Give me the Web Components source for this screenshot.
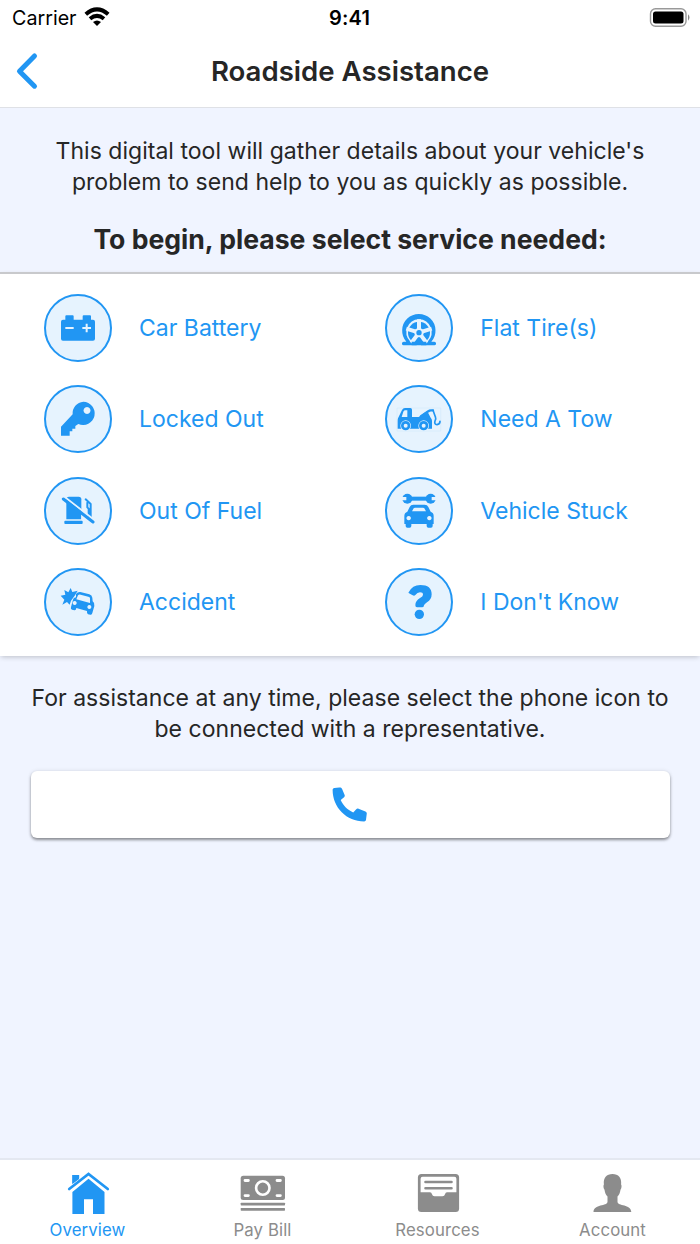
<!DOCTYPE html>
<html lang="en">
<head>
<meta charset="utf-8">
<title>Roadside Assistance</title>
<style>
  body {
    margin: 0;
    background: #f0f4ff;
    font-family: Inter, "Liberation Sans", sans-serif;
    color: #262626;
    --blue: #2196f3;
    --grey: #8c8c8c;
  }
</style>
</head>
<body>
<roadside-app></roadside-app>

<script>
// Service icons share the 204 unit box of the circle they sit in
const serviceIcons = {
  battery: `
    <path d="M57 77h7V67q0-3 3-3h19q3 0 3 3v10h27V67q0-3 3-3h19q3 0 3 3v10h6q6 0 6 6v51q0 6-6 6H57q-6 0-6-6V83q0-6 6-6z"/>
    <path d="M64 102h25M115 102h26M128 89v26" fill="none" stroke="#e6f3fe" stroke-width="6"/>`,
  key: `
    <path fill-rule="evenodd" d="M118 50a35 35 0 1 1-15 67l-9 6v8h-9v8h-8v13H51v-27l35-37a35 35 0 0 1 32-38zm11 16a10.500 10.500 0 1 0 .1 0z"/>`,
  fuel: `
    <path d="M67 67q0-8 8-8h29q8 0 8 8v60H67z"/>
    <path d="M125 67l15 14v40M130 77v14l6 6M134 97v20" fill="none" stroke="currentColor" stroke-width="6" stroke-linecap="round" stroke-linejoin="round"/>
    <path d="M62 60L148 127" fill="none" stroke="#e6f3fe" stroke-width="6"/>
    <path d="M112 112l10 12v5h-10z" fill="#e6f3fe"/>
    <path d="M58 66L147 135" fill="none" stroke="currentColor" stroke-width="9" stroke-linecap="round"/>
    <rect x="61" y="131" width="55" height="10" rx="3"/>`,
  accident: `
    <path d="M50 83l14-3-3-14 12 7 7-13 5 12 16-4-8 14-12 16-4 12-8-8-14 8 6-15z"/>
    <path fill-rule="evenodd" d="M96 78q5-7 13-6l27 7q8 2 9 10l1 11q7 5 5 14l-6 21q-1 6-6 5l-7-1q-4-1-3-10l-32-9q-1 8-6 7l-7-2q-5-1-3-8l6-22q1-6 9-7zm6 4l-5 12 41 11v-14q0-4-5-5l-23-6q-6-1-8 2zm-10 17a6 6 0 1 0 .1 0zm44 12a6 6 0 1 0 .1 0z"/>`,
  tire: `
    <path fill-rule="evenodd" d="M64 143a50 50 0 1 1 75 0h9q5 0 5 5v1q0 5-5 5H56q-5 0-5-5v-1q0-5 5-5zM102 76a39 39 0 0 0-26 67h52a39 39 0 0 0-26-67z"/>
    <circle cx="102" cy="116" r="33"/>
    <path d="M102 116V76M102 116L64 104M102 116L140 104M102 116L79 147M102 116L125 147" fill="none" stroke="#e6f3fe" stroke-width="12"/>
    <circle cx="102" cy="116" r="14" fill="#e6f3fe"/>
    <circle cx="102" cy="116" r="8"/>
    <path d="M80 143h15v11H80zM108 143h16v11h-16z"/>`,
  tow: `
    <path fill="none" stroke="#d3eafc" stroke-width="2" d="M36 69h131v69H36z"/>
    <path fill-rule="evenodd" d="M39 100l12-25q3-6 9-6h16q5 0 5 5v22h20l18-13 8-4 10 19q4 4 4 9v24H38v-23q0-4 1-8zm11-4h17V76h-6q-4 0-6 4z"/>
    <path d="M108 94l22-15q3-3 8-3h6" fill="none" stroke="currentColor" stroke-width="7" stroke-linecap="round" stroke-linejoin="round"/>
    <path d="M144 76l7 19q3 7-1 13-3 10 6 11 9-1 9-10" fill="none" stroke="currentColor" stroke-width="5" stroke-linecap="round" stroke-linejoin="round"/>
    <circle cx="62" cy="122" r="16" fill="#e6f3fe"/>
    <circle cx="116" cy="122" r="16" fill="#e6f3fe"/>
    <circle cx="62" cy="122" r="10" fill="none" stroke="currentColor" stroke-width="8"/>
    <circle cx="116" cy="122" r="10" fill="none" stroke="currentColor" stroke-width="8"/>`,
  stuck: `
    <circle cx="67" cy="65" r="15"/>
    <circle cx="137" cy="65" r="15"/>
    <path d="M66 65h72" stroke="currentColor" stroke-width="12"/>
    <path d="M46 65h18M140 65h18" stroke="#e6f3fe" stroke-width="10"/>
    <path fill-rule="evenodd" d="M67 104L74 90q3-7 11-7h34q8 0 11 7l7 14q9 3 9 13v24h-3v6q0 5-5 5h-8q-5 0-5-5v-6H79v6q0 5-5 5h-7q-5 0-5-5v-6h-4v-24q0-10 9-13zm14-1h42l-5-9q-1-2-4-2H90q-3 0-4 2zM71 117a6.500 6.500 0 1 0 .1 0zM133 117a6.500 6.500 0 1 0 .1 0z"/>`,
  question: `
    <path d="M71 73q11-22 35-22q34 0 34 28q0 15-14 24q-8 6-9 9q0 6-5 6H96q-5 0-5-6q0-14 14-22q9-5 9-10q0-7-9-7q-8 0-14 8q-3 4-8 1l-11-6q-3-2-1-3z"/>
    <circle cx="103" cy="139" r="14"/>`
}

const tabIcons = {
  home: `
    <path d="M8.400 17V6h6.700v5zM24.500 9.700L40.500 23v22H29V30.300h-9V45H8.400V23z"/>
    <path d="M5.200 20.200L24.500 5.400l19.300 14.800" fill="none" stroke="#fff" stroke-width="5"/>
    <path d="M8.400 15V6h6.700v4z"/>
    <path d="M5.200 20L24.500 5l19.300 15" fill="none" stroke="currentColor" stroke-width="2.700" stroke-linecap="round"/>`,
  bill: `
    <rect x="1.700" y="6.700" width="44.300" height="24.400" rx="2.500"/>
    <rect x="1.700" y="33.700" width="44.300" height="2.700" rx=".6"/>
    <rect x="1.700" y="39" width="44.300" height="2.700" rx=".6"/>
    <ellipse cx="23.800" cy="19" rx="6.700" ry="6.700" fill="none" stroke="#fff" stroke-width="2.600"/>
    <path d="M6 11.500h3.400M38 11.500h3.400M6 26.600h3.400M38 26.600h3.400" stroke="#fff" stroke-width="2.800" stroke-linecap="round"/>`,
  tray: `
    <rect x="3.900" y="5" width="41.200" height="38" rx="3.500"/>
    <path fill="#fff" d="M8.600 7.800h31.800q2 0 2 2v13.400H33q-1.500 0-2 2t-2.500 2h-8q-2 0-2.500-2t-2-2H6.600V9.800q0-2 2-2z"/>
    <path d="M11.500 13h26M11.500 19.200h26" stroke="currentColor" stroke-width="2.600" stroke-linecap="round"/>`,
  person: `
    <path d="M23.500 5c6 0 9.300 3.800 8.600 10.500.8 1 .5 4-.6 5.200-.4 3-1.400 5.200-3 6.700v5.300c0 4.500 13.800 2.300 13.800 10.300H4.500c0-8 14-5.800 14-10.300v-5.300c-1.600-1.500-2.600-3.700-3-6.700-1.100-1.200-1.400-4.200-.6-5.200C14.200 8.800 17.500 5 23.500 5z"/>`
}

class StatusBar extends HTMLElement {
  constructor() {
    super()
    this.attachShadow({ mode: "open" })
  }

  connectedCallback() {
    this.shadowRoot.innerHTML = `
    <style>
      :host {
        display: grid;
        grid-template-columns: 1fr auto 1fr;
        align-items: center;
        height: 36px;
        padding: 0 9px 0 12px;
        box-sizing: border-box;
        background: #fff;
        color: #000;
        font-size: 19.700px;
      }
      .carrier { display: flex; align-items: center; gap: 7px; }
      .time { font-weight: 600; font-size: 20px; margin-right: 4px; letter-spacing: .2px; }
      .battery { justify-self: end; }
      svg { display: block; }
      .carrier svg { margin-bottom: 2px; }
    </style>
    <div class="carrier">
      <span>Carrier</span>
      <svg width="26" height="20" viewBox="0 0 26 20" fill="none" stroke="#000" stroke-width="4">
        <path d="M1.800 7.200Q13-2.500 24.200 7.200M6 11.700q7-5.600 14 0"/>
        <path d="M9 15q4-3 8 0l-4 4z" fill="#000" stroke="none"/>
      </svg>
    </div>
    <div class="time">9:41</div>
    <svg class="battery" width="42" height="20" viewBox="0 0 42 20">
      <rect x="1.500" y=".8" width="35.500" height="17.400" rx="5" fill="none" stroke="#999" stroke-width="1.400"/>
      <rect x="4" y="3.500" width="30.500" height="12" rx="2.500"/>
      <path d="M39 6.300q3 3.200 0 6.400z" fill="#888"/>
    </svg>`
  }
}

class PageHeader extends HTMLElement {
  constructor() {
    super()
    this.attachShadow({ mode: "open" })
  }

  connectedCallback() {
    this.shadowRoot.innerHTML = `
    <style>
      :host {
        display: grid;
        grid-template-columns: 50px 1fr 50px;
        align-items: center;
        height: 72px;
        padding-bottom: 1px;
        box-sizing: border-box;
        background: #fff;
        border-bottom: 1px solid #dfe1e6;
      }
      svg { display: block; margin: 0 0 1px 15px; }
      h1 { margin: 0; font-size: 27.600px; font-weight: 600; text-align: center; white-space: nowrap; }
    </style>
    <svg width="24" height="38" viewBox="0 0 24 38" fill="none" stroke="#2196f3" stroke-width="5" stroke-linecap="round" stroke-linejoin="round">
      <path d="M19.500 4L4.500 19.300l15 14.900"/>
    </svg>
    <h1><slot></slot></h1>`
  }
}

class ServiceItem extends HTMLElement {
  constructor() {
    super()
    this.attachShadow({ mode: "open" })
  }

  connectedCallback() {
    this.shadowRoot.innerHTML = `
    <style>
      :host { display: flex; align-items: center; gap: 27px; color: var(--blue); }
      .circle {
        width: 68px;
        height: 68px;
        box-sizing: border-box;
        border: 2px solid var(--blue);
        border-radius: 50%;
        background: #e6f3fe;
      }
      svg { display: block; margin: -2px; }
      .label { font-size: 23px; white-space: nowrap; }
    </style>
    <div class="circle">
      <svg width="68" height="68" viewBox="0 0 204 204" fill="currentColor">${serviceIcons[this.getAttribute("icon")]}</svg>
    </div>
    <span class="label"><slot></slot></span>`
  }
}

class CallButton extends HTMLElement {
  constructor() {
    super()
    this.attachShadow({ mode: "open" })
  }

  connectedCallback() {
    this.shadowRoot.innerHTML = `
    <style>
      :host { display: block; }
      button {
        display: flex;
        align-items: center;
        justify-content: center;
        width: 100%;
        height: 67px;
        padding: 0 1px 0 0;
        border: 0;
        border-radius: 6px;
        background: #fff;
        box-shadow: 0 2px 3px rgba(0, 0, 0, .4), 0 0 4px rgba(0, 0, 0, .1);
      }
    </style>
    <button aria-label="Call">
      <svg width="45" height="45" viewBox="0 0 24 24" fill="#2196f3">
        <path d="M6.540 2.900 3.900 3.200C3.300 3.300 3 3.700 3 4.200 3 13.500 10.500 21 19.800 21c.5 0 .9-.3 1-.9l.4-3.200c.1-.5-.2-1-.7-1.200l-3.700-1.500c-.4-.2-.9-.1-1.200.3l-1.600 1.700C10.700 14.700 8.600 12.500 7.300 9.600l1.800-1.500c.3-.3.5-.8.3-1.200L8 3.600c-.3-.6-.8-.8-1.460-.7z"/>
      </svg>
    </button>`
  }
}

class TabItem extends HTMLElement {
  constructor() {
    super()
    this.attachShadow({ mode: "open" })
  }

  connectedCallback() {
    this.shadowRoot.innerHTML = `
    <style>
      :host { display: flex; flex-direction: column; align-items: center; color: var(--grey); }
      :host([active]) { color: var(--blue); }
      svg { display: block; }
      span { font-size: 16.800px; line-height: 27px; letter-spacing: .1px; }
    </style>
    <svg width="48" height="48" viewBox="0 0 48 48" fill="currentColor">${tabIcons[this.getAttribute("icon")]}</svg>
    <span><slot></slot></span>`
  }
}

class TabBar extends HTMLElement {
  constructor() {
    super()
    this.attachShadow({ mode: "open" })
  }

  connectedCallback() {
    this.shadowRoot.innerHTML = `
    <style>
      :host {
        display: grid;
        grid-template-columns: repeat(4, 1fr);
        height: 86px;
        padding-top: 9px;
        box-sizing: border-box;
        background: #fff;
        border-top: 2px solid #e4e8f1;
      }
    </style>
    <slot></slot>`
  }
}

class RoadsideApp extends HTMLElement {
  constructor() {
    super()
    this.attachShadow({ mode: "open" })
  }

  connectedCallback() {
    this.shadowRoot.innerHTML = `
    <style>
      :host { display: flex; flex-direction: column; height: 1244px; }
      p { margin: 0; font-size: 23px; line-height: 30.500px; letter-spacing: .03px; text-align: center; white-space: nowrap; }
      .intro { height: 164px; padding-top: 28px; box-sizing: border-box; }
      h2 { margin: 25px 0 0; font-size: 26.600px; line-height: 34px; font-weight: 700; text-align: center; white-space: nowrap; }
      .services {
        display: grid;
        grid-template-columns: 341.300px 1fr;
        gap: 23.300px 0;
        height: 384px;
        padding: 20px 0 0 44px;
        box-sizing: border-box;
        align-content: start;
        background: #fff;
        border-top: 2px solid #c8c9cc;
        box-shadow: 0 2px 5px -1px rgba(0, 0, 0, .22);
      }
      .help { flex: 1; padding: 27px 30.500px 0; }
      .help p { margin-bottom: 27px; }
    </style>
    <status-bar></status-bar>
    <page-header>Roadside Assistance</page-header>
    <section class="intro">
      <p>This digital tool will gather details about your vehicle's<br>problem to send help to you as quickly as possible.</p>
      <h2>To begin, please select service needed:</h2>
    </section>
    <section class="services">
      <service-item icon="battery">Car Battery</service-item>
      <service-item icon="tire">Flat Tire(s)</service-item>
      <service-item icon="key">Locked Out</service-item>
      <service-item icon="tow">Need A Tow</service-item>
      <service-item icon="fuel">Out Of Fuel</service-item>
      <service-item icon="stuck">Vehicle Stuck</service-item>
      <service-item icon="accident">Accident</service-item>
      <service-item icon="question">I Don't Know</service-item>
    </section>
    <section class="help">
      <p>For assistance at any time, please select the phone icon to<br>be connected with a representative.</p>
      <call-button></call-button>
    </section>
    <tab-bar>
      <tab-item icon="home" active>Overview</tab-item>
      <tab-item icon="bill">Pay Bill</tab-item>
      <tab-item icon="tray">Resources</tab-item>
      <tab-item icon="person">Account</tab-item>
    </tab-bar>`
  }
}

window.customElements.define("status-bar", StatusBar)
window.customElements.define("page-header", PageHeader)
window.customElements.define("service-item", ServiceItem)
window.customElements.define("call-button", CallButton)
window.customElements.define("tab-item", TabItem)
window.customElements.define("tab-bar", TabBar)
window.customElements.define("roadside-app", RoadsideApp)
</script>
</body>
</html>
